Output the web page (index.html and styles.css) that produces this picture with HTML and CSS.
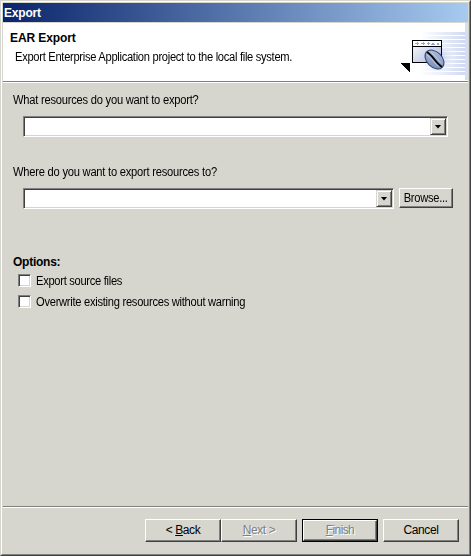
FILE: index.html
```html
<!DOCTYPE html>
<html lang="en">
<head>
<meta charset="utf-8">
<title>Export</title>
<link rel="stylesheet" href="styles.css">
</head>
<body>
<div class="window">
  <div class="frame">
    <div class="titlebar"><span class="t-title">Export</span></div>
    <header class="banner">
      <div class="banner-text">
        <h1><span class="t-head">EAR Export</span></h1>
        <p><span class="narrow t-desc">Export Enterprise Application project to the local file system.</span></p>
      </div>
      <svg class="art" width="70" height="57" viewBox="398 23 70 57" shape-rendering="crispEdges" aria-hidden="true">
        <defs>
          <linearGradient id="rays" gradientUnits="userSpaceOnUse" x1="420" x2="468" y1="0" y2="0"><stop offset="0" stop-color="#fff"/><stop offset="1" stop-color="#cdd7f1"/></linearGradient>
          <linearGradient id="pane" x1="0" y1="0" x2="1" y2="1"><stop offset="0" stop-color="#fff"/><stop offset="1" stop-color="#a9b5dd"/></linearGradient>
          <linearGradient id="bean" x1="0" y1="0" x2="1" y2="1"><stop offset="0" stop-color="#b8c3de"/><stop offset="1" stop-color="#7088b8"/></linearGradient>
          <radialGradient id="glow"><stop offset="0" stop-color="#b4c2ea"/><stop offset="1" stop-color="#fff" stop-opacity="0"/></radialGradient>
        </defs>
        <g fill="url(#rays)">
          <rect x="420" y="32" width="48" height="3"/><rect x="420" y="36" width="48" height="3"/>
          <rect x="420" y="40" width="48" height="3"/><rect x="420" y="44" width="48" height="3"/>
          <rect x="420" y="48" width="48" height="3"/><rect x="420" y="52" width="48" height="3"/>
          <rect x="420" y="56" width="48" height="3"/><rect x="420" y="60" width="48" height="3"/>
          <rect x="420" y="64" width="48" height="3"/><rect x="420" y="68" width="48" height="3"/>
          <rect x="420" y="72" width="48" height="3"/>
        </g>
        <rect x="465" y="23" width="3" height="57" fill="#d5def3"/>
        <ellipse cx="438" cy="57" rx="20" ry="18" fill="url(#glow)"/>
        <path d="M400 63h10v10z"/>
        <rect x="412.500" y="40.500" width="29" height="22" fill="url(#pane)" stroke="#000"/>
        <rect x="413" y="41" width="28" height="5" fill="#fff"/>
        <path d="M412 46.500h30" stroke="#000"/>
        <path d="M415 43.500h4M421 43.500h4M427 43.500h3M431 44.500h4M432 43.500h2M437 43.500h2M437 44.500h2" stroke="#93a5ce"/>
        <path d="M417.500 42v3M423.500 42v3M428.500 42v3" stroke="#93a5ce"/>
        <g shape-rendering="auto" transform="rotate(45 434.500 59.500)">
          <ellipse cx="434.500" cy="59.500" rx="11" ry="7.600" fill="url(#bean)" stroke="#314878"/>
          <path d="M424 59.500q5-.8 10.500 0t10.500 0" fill="none" stroke="#000" stroke-width="1.800"/>
          <path d="M426 61.500q5-.8 9 0t7 0M427 57q5-.8 9 0t6 0" fill="none" stroke="#d6def0" stroke-width=".6"/>
        </g>
      </svg>
    </header>
    <main class="content">
      <div class="label first"><span class="narrow t-what">What resources do you want to export?</span></div>
      <div class="row wide"><div class="combo"><i class="drop"></i></div></div>
      <div class="label second"><span class="narrow t-where">Where do you want to export resources to?</span></div>
      <div class="row"><div class="combo"><i class="drop"></i></div><button class="btn browse"><span class="narrow t-browse">Browse...</span></button></div>
      <h2><span class="t-opt">Options:</span></h2>
      <div class="check"><i class="box"></i><span class="narrow t-src">Export source files</span></div>
      <div class="check"><i class="box"></i><span class="narrow t-over">Overwrite existing resources without warning</span></div>
    </main>
    <footer class="footer">
      <button class="btn"><span class="t-back">&lt; <u>B</u>ack</span></button>
      <button class="btn off"><span class="t-next"><u>N</u>ext &gt;</span></button>
      <div class="default"><button class="btn off"><span class="t-fin"><u>F</u>inish</span></button></div>
      <button class="btn cancel"><span class="t-can">Cancel</span></button>
    </footer>
  </div>
</div>
</body>
</html>
```
FILE: styles.css
```css
* { box-sizing: border-box; }
body { margin: 0; background: #d6d5ce; font: 12px/14px "Liberation Sans", Arial, sans-serif; color: #000; }
.window { width: 471px; height: 556px; border: 1px solid; border-color: #d6d5ce #404040 #404040 #d6d5ce; }
.frame { height: 554px; border: 1px solid; border-color: #fff #808080 #808080 #fff; padding: 1px 1px 0; display: flex; flex-direction: column; }
span { white-space: nowrap; }
.narrow { display: inline-block; transform: scaleX(.93); transform-origin: 0 50%; }
.titlebar { flex: none; height: 19px; padding: 3px 1px; background: linear-gradient(90deg, #0a246a, #a6caf0); color: #fff; font-weight: bold; }
.banner { flex: none; margin-top: 1px; height: 60px; background: #fff; border-bottom: 1px solid #fff; box-shadow: inset 0 -1px #808080; display: flex; justify-content: space-between; }
.banner-text { padding: 8px 0 0 7px; }
h1, h2, p { margin: 0; font-size: 12px; line-height: 14px; }
p { padding: 5px 0 0 5px; }
.art { flex: none; }
.content { flex: 1; padding: 10px 15px 0 10px; }
.label { height: 14px; }
.second { margin-top: 28px; }
.row { display: flex; height: 21px; margin: 9px 0 0 10px; gap: 5px; }
.wide { margin-right: 5px; }
.combo { flex: 1; display: flex; justify-content: flex-end; height: 21px; background: #fff; border: 1px solid; border-color: #808080 #fff #fff #808080; box-shadow: inset 1px 1px #404040, inset -1px -1px #d6d5ce; padding: 1px; }
.drop { width: 16px; height: 17px; background: #d6d5ce; border: 1px solid; border-color: #d6d5ce #404040 #404040 #d6d5ce; box-shadow: inset 1px 1px #fff, inset -1px -1px #808080; display: grid; place-items: center; }
.drop::after { content: ""; width: 7px; height: 4px; background: #000; clip-path: polygon(0 0, 100% 0, 50% 100%); }
.btn { flex: none; width: 76px; height: 23px; padding: 0; margin: 0; background: #d6d5ce; border: 1px solid; border-color: #fff #404040 #404040 #fff; box-shadow: inset -1px -1px #808080; font: inherit; color: #000; border-radius: 0; }
.browse { width: 54px; height: 20px; }
.off { color: #808080; text-shadow: 1px 1px #fff; }
h2 { margin-top: 46px; }
.check { display: flex; align-items: center; height: 14px; margin: 4px 0 0 5px; gap: 5px; }
.check span { padding-top: 2px; }
.check + .check { margin-top: 7px; }
.box { width: 13px; height: 13px; background: #fff; border: 1px solid; border-color: #808080 #fff #fff #808080; box-shadow: inset 1px 1px #404040, inset -1px -1px #d6d5ce; }
.footer { flex: none; height: 48px; border-top: 1px solid #808080; box-shadow: inset 0 1px #fff; display: flex; padding: 12px 10px 0 142px; }
.footer .btn { padding-bottom: 2px; }
.default { border: 1px solid #000; width: 76px; height: 23px; margin-left: 5px; }
.default .btn { width: 74px; height: 21px; }
.cancel { margin-left: 5px; }
.t-title { letter-spacing: -.2px; }
.t-head { letter-spacing: -.1px; }
.t-opt { letter-spacing: -.25px; }
.t-desc, .t-src { letter-spacing: -.32px; }
.t-over { letter-spacing: -.3px; }
.t-what, .t-where { letter-spacing: -.25px; }
.t-browse { letter-spacing: -.3px; transform-origin: 50% 50%; }
.t-back, .t-next, .t-can { letter-spacing: -.4px; }
.t-fin { letter-spacing: -.6px; }
```
